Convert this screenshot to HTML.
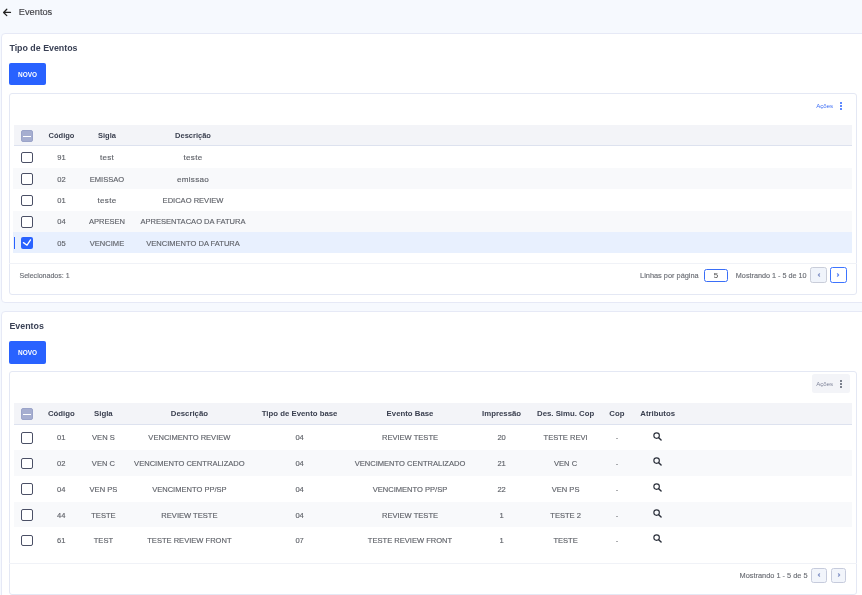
<!DOCTYPE html><html><head><meta charset="utf-8"><style>
html,body{margin:0;padding:0;} body{will-change:transform;} body{width:862px;height:595px;overflow:hidden;position:relative;background:#f6f9fe;font-family:"Liberation Sans", sans-serif;}
.t{position:absolute;line-height:20px;white-space:nowrap;-webkit-text-stroke:0.14px currentColor;}
.b{position:absolute;}
</style></head><body>
<svg class="b" style="left:0;top:4px" width="16" height="16" viewBox="0 0 16 16"><path d="M10.5 8.45 H3.7 M6.8 5.25 L3.6 8.45 L6.8 11.65" fill="none" stroke="#222" stroke-width="1.25" stroke-linecap="round" stroke-linejoin="round"/></svg>
<div class="t" style="left:18.80px;top:2.10px;font-size:9.25px;font-weight:400;color:#3f3f44;">Eventos</div>
<div class="b" style="left:1.20px;top:33.00px;width:868.80px;height:270.00px;background:#fff;border:1.3px solid #e6e9f6;border-radius:4px;box-sizing:border-box;"></div>
<div class="t" style="left:9.40px;top:38.00px;font-size:8.85px;font-weight:700;color:#3a4155;-webkit-text-stroke:0;">Tipo de Eventos</div>
<div class="b" style="left:9.40px;top:62.60px;width:36.40px;height:22.80px;background:#2962ff;border-radius:2px;"></div>
<div class="t" style="left:-122.40px;width:300px;top:64.90px;font-size:6.46px;font-weight:700;color:#fff;text-align:center;-webkit-text-stroke:0;">NOVO</div>
<div class="b" style="left:9.40px;top:93.20px;width:847.30px;height:201.80px;background:#fff;border:1px solid #e4e8f4;border-radius:3px;box-sizing:border-box;"></div>
<div class="t" style="right:28.90px;top:95.60px;font-size:6.1px;font-weight:400;color:#3d6ef5;text-align:right;-webkit-text-stroke:0;">Ações</div>
<svg class="b" style="left:836.8px;top:99.6px" width="8" height="12" viewBox="0 0 8 12"><circle cx="4" cy="3" r="1" fill="#2962ff"/><circle cx="4" cy="6" r="1" fill="#2962ff"/><circle cx="4" cy="9.1" r="1" fill="#2962ff"/></svg>
<div class="b" style="left:13.50px;top:125.20px;width:838.50px;height:21.30px;background:#f3f4f8;border-bottom:1px solid #dde2ef;box-sizing:border-box;"></div>
<div class="b" style="left:21.20px;top:130.00px;width:11.70px;height:11.70px;background:#a6aed0;border:1px solid #9ba4c9;border-radius:2px;box-sizing:border-box;"></div>
<div class="b" style="left:23.40px;top:135.70px;width:7.40px;height:1.50px;background:#fff;"></div>
<div class="t" style="left:-88.50px;width:300px;top:125.60px;font-size:7.5px;font-weight:700;color:#3b4050;text-align:center;-webkit-text-stroke:0;">Código</div>
<div class="t" style="left:-43.00px;width:300px;top:125.60px;font-size:7.5px;font-weight:700;color:#3b4050;text-align:center;-webkit-text-stroke:0;">Sigla</div>
<div class="t" style="left:43.00px;width:300px;top:125.60px;font-size:7.5px;font-weight:700;color:#3b4050;text-align:center;-webkit-text-stroke:0;">Descrição</div>
<div class="b" style="left:13.20px;top:146.50px;width:838.80px;height:21.40px;background:#fff;"></div>
<div class="b" style="left:21.20px;top:151.80px;width:11.70px;height:11.70px;border:1.5px solid #4b5066;border-radius:2px;box-sizing:border-box;background:#fff;"></div>
<div class="t" style="left:-88.50px;width:300px;top:148.10px;font-size:7.55px;font-weight:400;color:#5f6269;text-align:center;">91</div>
<div class="t" style="left:-43.00px;width:300px;top:148.10px;font-size:8.1px;font-weight:400;color:#5f6269;text-align:center;letter-spacing:0.25px;">test</div>
<div class="t" style="left:43.00px;width:300px;top:148.10px;font-size:8.1px;font-weight:400;color:#5f6269;text-align:center;letter-spacing:0.25px;">teste</div>
<div class="b" style="left:13.20px;top:167.90px;width:838.80px;height:21.40px;background:#f8f9fb;"></div>
<div class="b" style="left:21.20px;top:173.20px;width:11.70px;height:11.70px;border:1.5px solid #4b5066;border-radius:2px;box-sizing:border-box;background:#fff;"></div>
<div class="t" style="left:-88.50px;width:300px;top:169.50px;font-size:7.55px;font-weight:400;color:#5f6269;text-align:center;">02</div>
<div class="t" style="left:-43.00px;width:300px;top:169.50px;font-size:7.55px;font-weight:400;color:#5f6269;text-align:center;">EMISSAO</div>
<div class="t" style="left:43.00px;width:300px;top:169.50px;font-size:8.1px;font-weight:400;color:#5f6269;text-align:center;letter-spacing:0.25px;">emissao</div>
<div class="b" style="left:13.20px;top:189.30px;width:838.80px;height:21.40px;background:#fff;"></div>
<div class="b" style="left:21.20px;top:194.60px;width:11.70px;height:11.70px;border:1.5px solid #4b5066;border-radius:2px;box-sizing:border-box;background:#fff;"></div>
<div class="t" style="left:-88.50px;width:300px;top:190.90px;font-size:7.55px;font-weight:400;color:#5f6269;text-align:center;">01</div>
<div class="t" style="left:-43.00px;width:300px;top:190.90px;font-size:8.1px;font-weight:400;color:#5f6269;text-align:center;letter-spacing:0.25px;">teste</div>
<div class="t" style="left:43.00px;width:300px;top:190.90px;font-size:7.55px;font-weight:400;color:#5f6269;text-align:center;">EDICAO REVIEW</div>
<div class="b" style="left:13.20px;top:210.70px;width:838.80px;height:21.40px;background:#f8f9fb;"></div>
<div class="b" style="left:21.20px;top:216.00px;width:11.70px;height:11.70px;border:1.5px solid #4b5066;border-radius:2px;box-sizing:border-box;background:#fff;"></div>
<div class="t" style="left:-88.50px;width:300px;top:212.30px;font-size:7.55px;font-weight:400;color:#5f6269;text-align:center;">04</div>
<div class="t" style="left:-43.00px;width:300px;top:212.30px;font-size:7.55px;font-weight:400;color:#5f6269;text-align:center;">APRESEN</div>
<div class="t" style="left:43.00px;width:300px;top:212.30px;font-size:7.55px;font-weight:400;color:#5f6269;text-align:center;">APRESENTACAO DA FATURA</div>
<div class="b" style="left:13.20px;top:232.10px;width:838.80px;height:21.40px;background:#e8f0fe;"></div>
<div class="b" style="left:13.50px;top:237.30px;width:1.50px;height:11.50px;background:#2962ff;"></div>
<div class="b" style="left:21.20px;top:237.30px;width:11.70px;height:11.70px;background:#2962ff;border-radius:2px;"></div>
<svg class="b" style="left:21.2px;top:237.3px" width="11.7" height="11.7" viewBox="0 0 12 12"><path d="M2.5 5.8 L6.2 8.4 L9.8 2.9" fill="none" stroke="#fff" stroke-width="1.35" stroke-linecap="round" stroke-linejoin="round"/></svg>
<div class="t" style="left:-88.50px;width:300px;top:233.70px;font-size:7.55px;font-weight:400;color:#5f6269;text-align:center;">05</div>
<div class="t" style="left:-43.00px;width:300px;top:233.70px;font-size:7.55px;font-weight:400;color:#5f6269;text-align:center;">VENCIME</div>
<div class="t" style="left:43.00px;width:300px;top:233.70px;font-size:7.55px;font-weight:400;color:#5f6269;text-align:center;">VENCIMENTO DA FATURA</div>
<div class="b" style="left:9.40px;top:263.00px;width:847.30px;height:1.00px;background:#f0f2f7;"></div>
<div class="t" style="left:19.50px;top:265.60px;font-size:7.06px;font-weight:400;color:#6b6e75;">Selecionados: 1</div>
<div class="t" style="right:163.30px;top:266.00px;font-size:7.38px;font-weight:400;color:#6b6e75;text-align:right;">Linhas por página</div>
<div class="b" style="left:704.30px;top:268.70px;width:23.30px;height:13.00px;border:1.6px solid #3a6ef7;border-radius:2.5px;box-sizing:border-box;background:#fff;"></div>
<div class="t" style="left:566.00px;width:300px;top:265.50px;font-size:7.9px;font-weight:400;color:#4a4a4a;text-align:center;-webkit-text-stroke:0;">5</div>
<div class="t" style="right:55.40px;top:266.00px;font-size:7.24px;font-weight:400;color:#6b6e75;text-align:right;">Mostrando 1 - 5 de 10</div>
<div class="b" style="left:810.20px;top:267.20px;width:16.40px;height:16.30px;background:#f0f4fb;border:1.7px solid #c9cdd9;border-radius:2.5px;box-sizing:border-box;"></div>
<svg class="b" style="left:814.50px;top:271.30px" width="8" height="8" viewBox="0 0 8 8"><path d="M4.6 2.75 L3.3 4 L4.6 5.25" fill="none" stroke="#8796c8" stroke-width="1.1" stroke-linecap="round" stroke-linejoin="round"/></svg>
<div class="b" style="left:830.30px;top:267.40px;width:16.40px;height:16.00px;background:#fff;border:1.7px solid #3d74ff;border-radius:2.5px;box-sizing:border-box;"></div>
<svg class="b" style="left:834.40px;top:271.30px" width="8" height="8" viewBox="0 0 8 8"><path d="M3.4 2.75 L4.7 4 L3.4 5.25" fill="none" stroke="#5f88f5" stroke-width="1.1" stroke-linecap="round" stroke-linejoin="round"/></svg>
<div class="b" style="left:1.20px;top:311.40px;width:868.80px;height:308.60px;background:#fff;border:1.3px solid #e6e9f6;border-radius:4px;box-sizing:border-box;"></div>
<div class="t" style="left:9.40px;top:316.00px;font-size:8.85px;font-weight:700;color:#3a4155;-webkit-text-stroke:0;">Eventos</div>
<div class="b" style="left:9.40px;top:341.00px;width:36.40px;height:22.80px;background:#2962ff;border-radius:2px;"></div>
<div class="t" style="left:-122.40px;width:300px;top:343.30px;font-size:6.46px;font-weight:700;color:#fff;text-align:center;-webkit-text-stroke:0;">NOVO</div>
<div class="b" style="left:9.40px;top:371.40px;width:847.30px;height:223.60px;background:#fff;border:1px solid #e4e8f4;border-radius:3px;box-sizing:border-box;"></div>
<div class="b" style="left:812.20px;top:374.30px;width:37.80px;height:18.70px;background:#f3f4f8;border-radius:2.5px;"></div>
<div class="t" style="right:28.90px;top:373.80px;font-size:6.1px;font-weight:400;color:#80859a;text-align:right;-webkit-text-stroke:0;">Ações</div>
<svg class="b" style="left:836.8px;top:377.6px" width="8" height="12" viewBox="0 0 8 12"><circle cx="4" cy="3" r="1" fill="#555b6b"/><circle cx="4" cy="6" r="1" fill="#555b6b"/><circle cx="4" cy="9.1" r="1" fill="#555b6b"/></svg>
<div class="b" style="left:13.50px;top:403.30px;width:838.50px;height:21.30px;background:#f3f4f8;border-bottom:1px solid #dde2ef;box-sizing:border-box;"></div>
<div class="b" style="left:21.20px;top:407.90px;width:11.70px;height:11.70px;background:#a6aed0;border:1px solid #9ba4c9;border-radius:2px;box-sizing:border-box;"></div>
<div class="b" style="left:23.40px;top:413.60px;width:7.40px;height:1.50px;background:#fff;"></div>
<div class="t" style="left:-88.70px;width:300px;top:403.70px;font-size:7.8px;font-weight:700;color:#3b4050;text-align:center;-webkit-text-stroke:0;">Código</div>
<div class="t" style="left:-46.60px;width:300px;top:403.70px;font-size:7.8px;font-weight:700;color:#3b4050;text-align:center;-webkit-text-stroke:0;">Sigla</div>
<div class="t" style="left:39.40px;width:300px;top:403.70px;font-size:7.8px;font-weight:700;color:#3b4050;text-align:center;-webkit-text-stroke:0;">Descrição</div>
<div class="t" style="left:149.60px;width:300px;top:403.70px;font-size:7.8px;font-weight:700;color:#3b4050;text-align:center;-webkit-text-stroke:0;">Tipo de Evento base</div>
<div class="t" style="left:260.00px;width:300px;top:403.70px;font-size:7.8px;font-weight:700;color:#3b4050;text-align:center;-webkit-text-stroke:0;">Evento Base</div>
<div class="t" style="left:351.60px;width:300px;top:403.70px;font-size:7.8px;font-weight:700;color:#3b4050;text-align:center;-webkit-text-stroke:0;">Impressão</div>
<div class="t" style="left:415.60px;width:300px;top:403.70px;font-size:7.8px;font-weight:700;color:#3b4050;text-align:center;-webkit-text-stroke:0;">Des. Simu. Cop</div>
<div class="t" style="left:466.90px;width:300px;top:403.70px;font-size:7.8px;font-weight:700;color:#3b4050;text-align:center;-webkit-text-stroke:0;">Cop</div>
<div class="t" style="left:507.70px;width:300px;top:403.70px;font-size:7.8px;font-weight:700;color:#3b4050;text-align:center;-webkit-text-stroke:0;">Atributos</div>
<div class="b" style="left:13.50px;top:424.60px;width:838.50px;height:25.70px;background:#fff;"></div>
<div class="b" style="left:21.20px;top:432.00px;width:11.70px;height:11.70px;border:1.5px solid #4b5066;border-radius:2px;box-sizing:border-box;background:#fff;"></div>
<div class="t" style="left:-88.70px;width:300px;top:428.45px;font-size:7.55px;font-weight:400;color:#5f6269;text-align:center;">01</div>
<div class="t" style="left:-46.60px;width:300px;top:428.45px;font-size:7.55px;font-weight:400;color:#5f6269;text-align:center;">VEN S</div>
<div class="t" style="left:39.40px;width:300px;top:428.45px;font-size:7.55px;font-weight:400;color:#5f6269;text-align:center;">VENCIMENTO REVIEW</div>
<div class="t" style="left:149.60px;width:300px;top:428.45px;font-size:7.55px;font-weight:400;color:#5f6269;text-align:center;">04</div>
<div class="t" style="left:260.00px;width:300px;top:428.45px;font-size:7.55px;font-weight:400;color:#5f6269;text-align:center;">REVIEW TESTE</div>
<div class="t" style="left:351.60px;width:300px;top:428.45px;font-size:7.55px;font-weight:400;color:#5f6269;text-align:center;">20</div>
<div class="t" style="left:415.60px;width:300px;top:428.45px;font-size:7.55px;font-weight:400;color:#5f6269;text-align:center;">TESTE REVI</div>
<div class="t" style="left:466.90px;width:300px;top:428.45px;font-size:7.55px;font-weight:400;color:#5f6269;text-align:center;">-</div>
<svg class="b" style="left:652.00px;top:430.60px" width="11" height="11" viewBox="0 0 11 11"><circle cx="4.6" cy="4.6" r="2.75" fill="none" stroke="#2a2f3a" stroke-width="1.15"/><path d="M6.7 6.7 L9.1 9.1" stroke="#2a2f3a" stroke-width="1.4" stroke-linecap="round"/></svg>
<div class="b" style="left:13.50px;top:450.30px;width:838.50px;height:25.70px;background:#f8f9fb;"></div>
<div class="b" style="left:21.20px;top:457.70px;width:11.70px;height:11.70px;border:1.5px solid #4b5066;border-radius:2px;box-sizing:border-box;background:#fff;"></div>
<div class="t" style="left:-88.70px;width:300px;top:454.15px;font-size:7.55px;font-weight:400;color:#5f6269;text-align:center;">02</div>
<div class="t" style="left:-46.60px;width:300px;top:454.15px;font-size:7.55px;font-weight:400;color:#5f6269;text-align:center;">VEN C</div>
<div class="t" style="left:39.40px;width:300px;top:454.15px;font-size:7.55px;font-weight:400;color:#5f6269;text-align:center;">VENCIMENTO CENTRALIZADO</div>
<div class="t" style="left:149.60px;width:300px;top:454.15px;font-size:7.55px;font-weight:400;color:#5f6269;text-align:center;">04</div>
<div class="t" style="left:260.00px;width:300px;top:454.15px;font-size:7.55px;font-weight:400;color:#5f6269;text-align:center;">VENCIMENTO CENTRALIZADO</div>
<div class="t" style="left:351.60px;width:300px;top:454.15px;font-size:7.55px;font-weight:400;color:#5f6269;text-align:center;">21</div>
<div class="t" style="left:415.60px;width:300px;top:454.15px;font-size:7.55px;font-weight:400;color:#5f6269;text-align:center;">VEN C</div>
<div class="t" style="left:466.90px;width:300px;top:454.15px;font-size:7.55px;font-weight:400;color:#5f6269;text-align:center;">-</div>
<svg class="b" style="left:652.00px;top:456.30px" width="11" height="11" viewBox="0 0 11 11"><circle cx="4.6" cy="4.6" r="2.75" fill="none" stroke="#2a2f3a" stroke-width="1.15"/><path d="M6.7 6.7 L9.1 9.1" stroke="#2a2f3a" stroke-width="1.4" stroke-linecap="round"/></svg>
<div class="b" style="left:13.50px;top:476.00px;width:838.50px;height:25.70px;background:#fff;"></div>
<div class="b" style="left:21.20px;top:483.40px;width:11.70px;height:11.70px;border:1.5px solid #4b5066;border-radius:2px;box-sizing:border-box;background:#fff;"></div>
<div class="t" style="left:-88.70px;width:300px;top:479.85px;font-size:7.55px;font-weight:400;color:#5f6269;text-align:center;">04</div>
<div class="t" style="left:-46.60px;width:300px;top:479.85px;font-size:7.55px;font-weight:400;color:#5f6269;text-align:center;">VEN PS</div>
<div class="t" style="left:39.40px;width:300px;top:479.85px;font-size:7.55px;font-weight:400;color:#5f6269;text-align:center;">VENCIMENTO PP/SP</div>
<div class="t" style="left:149.60px;width:300px;top:479.85px;font-size:7.55px;font-weight:400;color:#5f6269;text-align:center;">04</div>
<div class="t" style="left:260.00px;width:300px;top:479.85px;font-size:7.55px;font-weight:400;color:#5f6269;text-align:center;">VENCIMENTO PP/SP</div>
<div class="t" style="left:351.60px;width:300px;top:479.85px;font-size:7.55px;font-weight:400;color:#5f6269;text-align:center;">22</div>
<div class="t" style="left:415.60px;width:300px;top:479.85px;font-size:7.55px;font-weight:400;color:#5f6269;text-align:center;">VEN PS</div>
<div class="t" style="left:466.90px;width:300px;top:479.85px;font-size:7.55px;font-weight:400;color:#5f6269;text-align:center;">-</div>
<svg class="b" style="left:652.00px;top:482.00px" width="11" height="11" viewBox="0 0 11 11"><circle cx="4.6" cy="4.6" r="2.75" fill="none" stroke="#2a2f3a" stroke-width="1.15"/><path d="M6.7 6.7 L9.1 9.1" stroke="#2a2f3a" stroke-width="1.4" stroke-linecap="round"/></svg>
<div class="b" style="left:13.50px;top:501.70px;width:838.50px;height:25.70px;background:#f8f9fb;"></div>
<div class="b" style="left:21.20px;top:509.10px;width:11.70px;height:11.70px;border:1.5px solid #4b5066;border-radius:2px;box-sizing:border-box;background:#fff;"></div>
<div class="t" style="left:-88.70px;width:300px;top:505.55px;font-size:7.55px;font-weight:400;color:#5f6269;text-align:center;">44</div>
<div class="t" style="left:-46.60px;width:300px;top:505.55px;font-size:7.55px;font-weight:400;color:#5f6269;text-align:center;">TESTE</div>
<div class="t" style="left:39.40px;width:300px;top:505.55px;font-size:7.55px;font-weight:400;color:#5f6269;text-align:center;">REVIEW TESTE</div>
<div class="t" style="left:149.60px;width:300px;top:505.55px;font-size:7.55px;font-weight:400;color:#5f6269;text-align:center;">04</div>
<div class="t" style="left:260.00px;width:300px;top:505.55px;font-size:7.55px;font-weight:400;color:#5f6269;text-align:center;">REVIEW TESTE</div>
<div class="t" style="left:351.60px;width:300px;top:505.55px;font-size:7.55px;font-weight:400;color:#5f6269;text-align:center;">1</div>
<div class="t" style="left:415.60px;width:300px;top:505.55px;font-size:7.55px;font-weight:400;color:#5f6269;text-align:center;">TESTE 2</div>
<div class="t" style="left:466.90px;width:300px;top:505.55px;font-size:7.55px;font-weight:400;color:#5f6269;text-align:center;">-</div>
<svg class="b" style="left:652.00px;top:507.70px" width="11" height="11" viewBox="0 0 11 11"><circle cx="4.6" cy="4.6" r="2.75" fill="none" stroke="#2a2f3a" stroke-width="1.15"/><path d="M6.7 6.7 L9.1 9.1" stroke="#2a2f3a" stroke-width="1.4" stroke-linecap="round"/></svg>
<div class="b" style="left:13.50px;top:527.40px;width:838.50px;height:25.70px;background:#fff;"></div>
<div class="b" style="left:21.20px;top:534.80px;width:11.70px;height:11.70px;border:1.5px solid #4b5066;border-radius:2px;box-sizing:border-box;background:#fff;"></div>
<div class="t" style="left:-88.70px;width:300px;top:531.25px;font-size:7.55px;font-weight:400;color:#5f6269;text-align:center;">61</div>
<div class="t" style="left:-46.60px;width:300px;top:531.25px;font-size:7.55px;font-weight:400;color:#5f6269;text-align:center;">TEST</div>
<div class="t" style="left:39.40px;width:300px;top:531.25px;font-size:7.55px;font-weight:400;color:#5f6269;text-align:center;">TESTE REVIEW FRONT</div>
<div class="t" style="left:149.60px;width:300px;top:531.25px;font-size:7.55px;font-weight:400;color:#5f6269;text-align:center;">07</div>
<div class="t" style="left:260.00px;width:300px;top:531.25px;font-size:7.55px;font-weight:400;color:#5f6269;text-align:center;">TESTE REVIEW FRONT</div>
<div class="t" style="left:351.60px;width:300px;top:531.25px;font-size:7.55px;font-weight:400;color:#5f6269;text-align:center;">1</div>
<div class="t" style="left:415.60px;width:300px;top:531.25px;font-size:7.55px;font-weight:400;color:#5f6269;text-align:center;">TESTE</div>
<div class="t" style="left:466.90px;width:300px;top:531.25px;font-size:7.55px;font-weight:400;color:#5f6269;text-align:center;">-</div>
<svg class="b" style="left:652.00px;top:533.40px" width="11" height="11" viewBox="0 0 11 11"><circle cx="4.6" cy="4.6" r="2.75" fill="none" stroke="#2a2f3a" stroke-width="1.15"/><path d="M6.7 6.7 L9.1 9.1" stroke="#2a2f3a" stroke-width="1.4" stroke-linecap="round"/></svg>
<div class="b" style="left:9.40px;top:562.80px;width:847.30px;height:1.00px;background:#f0f2f7;"></div>
<div class="t" style="right:54.40px;top:566.00px;font-size:7.39px;font-weight:400;color:#6b6e75;text-align:right;">Mostrando 1 - 5 de 5</div>
<div class="b" style="left:811.40px;top:567.70px;width:15.70px;height:15.10px;background:#f2f5fb;border:1.3px solid #c6cbdc;border-radius:2.5px;box-sizing:border-box;"></div>
<svg class="b" style="left:815.25px;top:571.25px" width="8" height="8" viewBox="0 0 8 8"><path d="M4.6 2.75 L3.3 4 L4.6 5.25" fill="none" stroke="#8796c8" stroke-width="1.1" stroke-linecap="round" stroke-linejoin="round"/></svg>
<div class="b" style="left:830.90px;top:567.70px;width:15.60px;height:15.10px;background:#f2f5fb;border:1.3px solid #c6cbdc;border-radius:2.5px;box-sizing:border-box;"></div>
<svg class="b" style="left:834.70px;top:571.25px" width="8" height="8" viewBox="0 0 8 8"><path d="M3.4 2.75 L4.7 4 L3.4 5.25" fill="none" stroke="#8796c8" stroke-width="1.1" stroke-linecap="round" stroke-linejoin="round"/></svg>
</body></html>
